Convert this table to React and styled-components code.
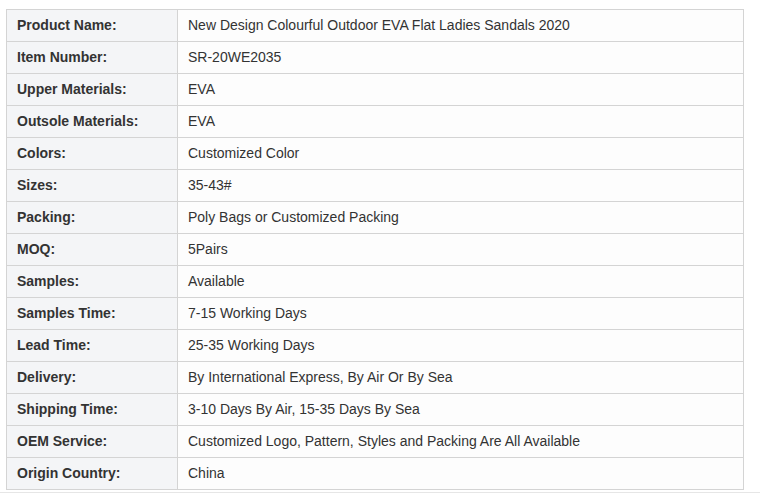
import React from "react";
import styled, { createGlobalStyle } from "styled-components";

const Global = createGlobalStyle`
  html, body { margin: 0; padding: 0; background: #ffffff; }
  body { font-family: "Liberation Sans", Arial, sans-serif; }
`;

const Wrap = styled.div`
  padding: 9px 0 2px 6px;
  border-bottom: 1px solid #e6e6e6;
  width: 754px;
`;

const Table = styled.table`
  border-collapse: collapse;
  width: 738px;
  font-size: 14px;
  color: #333;
`;

const Label = styled.td`
  width: 150px;
  height: 30px;
  padding: 0 10px 1px;
  border: 1px solid #d4d4d4;
  background: #f4f5f7;
  font-weight: bold;
  white-space: nowrap;
`;

const Value = styled.td`
  height: 30px;
  padding: 0 10px 1px;
  border: 1px solid #d4d4d4;
  background: #fdfdfd;
`;

const rows = [
  ["Product Name:", "New Design Colourful Outdoor EVA Flat Ladies Sandals 2020"],
  ["Item Number:", "SR-20WE2035"],
  ["Upper Materials:", "EVA"],
  ["Outsole Materials:", "EVA"],
  ["Colors:", "Customized Color"],
  ["Sizes:", "35-43#"],
  ["Packing:", "Poly Bags or Customized Packing"],
  ["MOQ:", "5Pairs"],
  ["Samples:", "Available"],
  ["Samples Time:", "7-15 Working Days"],
  ["Lead Time:", "25-35 Working Days"],
  ["Delivery:", "By International Express, By Air Or By Sea"],
  ["Shipping Time:", "3-10 Days By Air, 15-35 Days By Sea"],
  ["OEM Service:", "Customized Logo, Pattern, Styles and Packing Are All Available"],
  ["Origin Country:", "China"],
];

export default function App() {
  return (
    <>
      <Global />
      <Wrap>
        <Table>
          <tbody>
            {rows.map(([l, v]) => (
              <tr key={l}>
                <Label>{l}</Label>
                <Value>{v}</Value>
              </tr>
            ))}
          </tbody>
        </Table>
      </Wrap>
    </>
  );
}
